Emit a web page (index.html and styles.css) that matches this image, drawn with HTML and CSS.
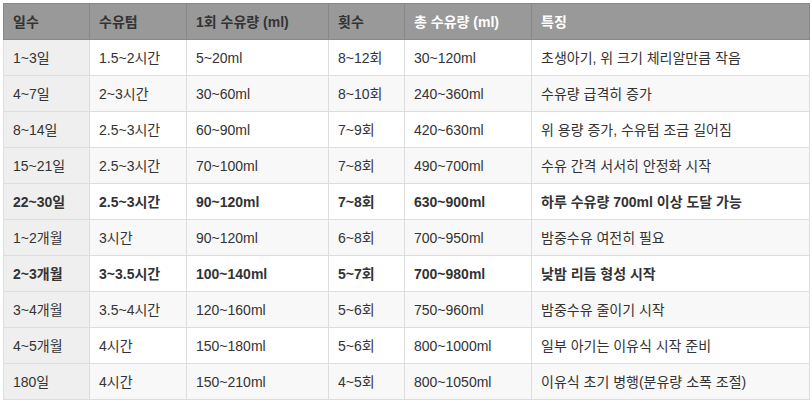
FILE: index.html
```html
<!DOCTYPE html>
<html lang="ko">
<head>
<meta charset="utf-8">
<link rel="stylesheet" href="styles.css">
</head>
<body>
<table class="feed">
<colgroup>
<col class="c1"><col class="c2"><col class="c3"><col class="c4"><col class="c5"><col class="c6">
</colgroup>
<thead>
<tr><th>일수</th><th>수유텀</th><th>1회 수유량 (ml)</th><th>횟수</th><th class="light">총 수유량 (ml)</th><th class="light">특징</th></tr>
</thead>
<tbody>
<tr><td>1~3일</td><td>1.5~2시간</td><td>5~20ml</td><td>8~12회</td><td>30~120ml</td><td>초생아기, 위 크기 체리알만큼 작음</td></tr>
<tr><td>4~7일</td><td>2~3시간</td><td>30~60ml</td><td>8~10회</td><td>240~360ml</td><td>수유량 급격히 증가</td></tr>
<tr><td>8~14일</td><td>2.5~3시간</td><td>60~90ml</td><td>7~9회</td><td>420~630ml</td><td>위 용량 증가, 수유텀 조금 길어짐</td></tr>
<tr><td>15~21일</td><td>2.5~3시간</td><td>70~100ml</td><td>7~8회</td><td>490~700ml</td><td>수유 간격 서서히 안정화 시작</td></tr>
<tr class="bold"><td>22~30일</td><td>2.5~3시간</td><td>90~120ml</td><td>7~8회</td><td>630~900ml</td><td>하루 수유량 700ml 이상 도달 가능</td></tr>
<tr><td>1~2개월</td><td>3시간</td><td>90~120ml</td><td>6~8회</td><td>700~950ml</td><td>밤중수유 여전히 필요</td></tr>
<tr class="bold"><td>2~3개월</td><td>3~3.5시간</td><td>100~140ml</td><td>5~7회</td><td>700~980ml</td><td>낮밤 리듬 형성 시작</td></tr>
<tr><td>3~4개월</td><td>3.5~4시간</td><td>120~160ml</td><td>5~6회</td><td>750~960ml</td><td>밤중수유 줄이기 시작</td></tr>
<tr><td>4~5개월</td><td>4시간</td><td>150~180ml</td><td>5~6회</td><td>800~1000ml</td><td>일부 아기는 이유식 시작 준비</td></tr>
<tr><td>180일</td><td>4시간</td><td>150~210ml</td><td>4~5회</td><td>800~1050ml</td><td>이유식 초기 병행(분유량 소폭 조절)</td></tr>
</tbody>
</table>
</body>
</html>
```

FILE: styles.css
```css
html, body {
  margin: 0;
  padding: 0;
  background: #ffffff;
}
body {
  padding: 3px 0 0 3px;
  font-family: "Liberation Sans", Arial, "Noto Sans CJK KR", sans-serif;
  font-size: 14px;
  color: #333333;
}
.feed {
  border-collapse: collapse;
  table-layout: fixed;
  width: 806px;
  border: 1px solid #cccccc;
}
.c1 { width: 86px; }
.c2 { width: 97px; }
.c3 { width: 142px; }
.c4 { width: 76px; }
.c5 { width: 127px; }
.c6 { width: 278px; }
.feed th, .feed td {
  height: 36px;
  padding: 0 9px;
  text-align: left;
  vertical-align: middle;
  line-height: 18px;
  white-space: nowrap;
  box-sizing: border-box;
}
.feed th {
  background: #999999;
  color: #333333;
  font-weight: bold;
  border: 1px solid #888888;
}
.feed th.light {
  color: #ffffff;
}
.feed td {
  border: 1px solid #dddddd;
  background: #ffffff;
}
.feed tbody tr:nth-child(even) td {
  background: #f8f8f8;
}
.feed tbody td:first-child,
.feed tbody tr:nth-child(even) td:first-child {
  background: #efefef;
}
.feed tr.bold td {
  font-weight: bold;
}
```
